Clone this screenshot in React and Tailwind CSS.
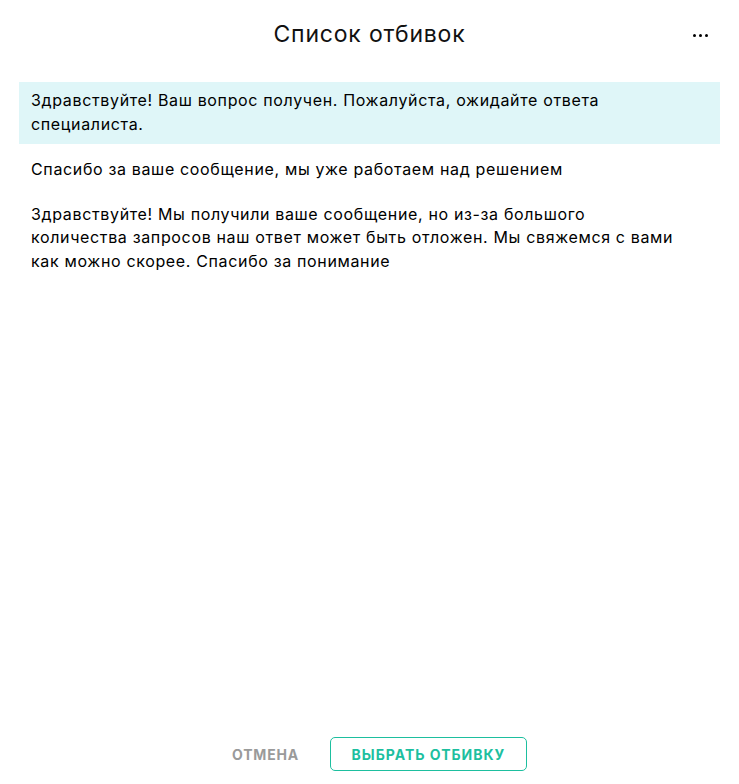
import React, { useState } from "react";

const templates = [
  "Здравствуйте! Ваш вопрос получен. Пожалуйста, ожидайте ответа специалиста.",
  "Спасибо за ваше сообщение, мы уже работаем над решением",
  "Здравствуйте! Мы получили ваше сообщение, но из-за большого количества запросов наш ответ может быть отложен. Мы свяжемся с вами как можно скорее. Спасибо за понимание",
];

const App = () => {
  const [selected, setSelected] = useState(0);

  return (
    <div
      className="flex h-[784px] w-[739px] flex-col bg-white text-black"
      style={{ fontFamily: "Inter, 'Noto Sans', sans-serif" }}
    >
      {/* header */}
      <div className="relative flex h-[68px] items-center justify-center">
        <h1 className="text-[23px] font-normal tracking-[0.8px] text-[#111]">
          Список отбивок
        </h1>
        <button className="absolute right-[31px] top-[34px] flex gap-[3px]">
          <span className="h-[3px] w-[3px] rounded-full bg-black" />
          <span className="h-[3px] w-[3px] rounded-full bg-black" />
          <span className="h-[3px] w-[3px] rounded-full bg-black" />
        </button>
      </div>

      {/* list */}
      <div className="mt-[14px] flex flex-1 flex-col gap-[7px] px-[19px]">
        {templates.map((text, i) => (
          <div
            key={i}
            onClick={() => setSelected(i)}
            className={`cursor-pointer py-[7.25px] pl-3 pr-[40px] text-[16px] leading-[23.5px] tracking-[0.65px] ${
              selected === i ? "bg-[#dff6f8]" : ""
            }`}
          >
            {text}
          </div>
        ))}
      </div>

      {/* footer */}
      <div className="flex items-center justify-center gap-[31px] pb-[13px] pl-[20px]">
        <button className="text-[14px] font-bold uppercase tracking-[0.8px] text-[#9a9a9a]">
          Отмена
        </button>
        <button className="h-[34px] w-[197px] rounded-[5px] border border-[#1dbf9f] text-[14px] font-bold uppercase tracking-[1px] text-[#1dbf9f]">
          Выбрать отбивку
        </button>
      </div>
    </div>
  );
};

export default App;
